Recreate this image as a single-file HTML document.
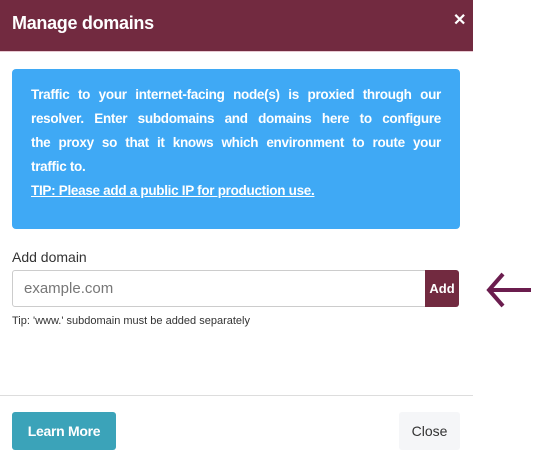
<!DOCTYPE html>
<html><head><style>
*{margin:0;padding:0;box-sizing:border-box}
body{width:543px;height:464px;background:#fff;font-family:"Liberation Sans",sans-serif;position:relative;overflow:hidden}
.hdr{position:absolute;left:0;top:0;width:473px;height:52px;background:#722a40;border-bottom:1px solid #e8c9d2}
.hdr h1{position:absolute;left:12px;top:13px;color:#fff;font-size:18px;font-weight:bold;letter-spacing:-0.3px}
.x{position:absolute;left:453px;top:10px;color:#fff;font-size:16px;font-weight:bold}
.info{position:absolute;left:12px;top:69px;width:448px;height:160px;background:#3fa9f5;border-radius:4px;padding:14px 19px 0 19px;color:#fff;font-weight:bold;font-size:13.5px;letter-spacing:-0.3px}
.info div{height:24px;line-height:24px;text-align:justify;text-align-last:justify;white-space:nowrap;overflow:visible}
.info div.l{text-align-last:left}
.lbl{position:absolute;left:12px;top:249px;font-size:14px;color:#333}
.inp{position:absolute;left:12px;top:270px;width:414px;height:37px;border:1px solid #ccc;border-radius:3px 0 0 3px;padding:0 11px;line-height:35px;color:#777;font-size:15px}
.add{position:absolute;left:425px;top:270px;width:34px;height:37px;background:#722a40;border-radius:0 3px 3px 0;color:#fff;font-weight:bold;font-size:13px;text-align:center;line-height:37px}
.tip{position:absolute;left:12px;top:315px;font-size:11px;color:#333}
.sep{position:absolute;left:0;top:395px;width:473px;height:1px;background:#ddd}
.lm{position:absolute;left:12px;top:412px;width:104px;height:38px;background:#3ba3b9;border-radius:3px;color:#fff;font-weight:bold;font-size:14px;text-align:center;line-height:38px;letter-spacing:-0.3px}
.cl{position:absolute;left:399px;top:412px;width:61px;height:38px;background:#f5f6f8;border-radius:3px;color:#333;font-size:14px;text-align:center;line-height:38px}
</style></head><body>
<div class="hdr"><h1>Manage domains</h1><div class="x">✕</div></div>
<div class="info">
<div>Traffic to your internet-facing node(s) is proxied through our</div>
<div>resolver. Enter subdomains and domains here to configure</div>
<div>the proxy so that it knows which environment to route your</div>
<div class="l">traffic to.</div>
<div class="l"><u>TIP: Please add a public IP for production use.</u></div>
</div>
<div class="lbl">Add domain</div>
<div class="inp">example.com</div>
<div class="add">Add</div>
<div class="tip">Tip: 'www.' subdomain must be added separately</div>
<div class="sep"></div>
<div class="lm">Learn More</div>
<div class="cl">Close</div>
<svg style="position:absolute;left:484px;top:272px" width="48" height="36" viewBox="0 0 48 36"><path d="M47 18H7M19 2L5 18L19 34" fill="none" stroke="#6b1d4e" stroke-width="4"/></svg>
</body></html>
